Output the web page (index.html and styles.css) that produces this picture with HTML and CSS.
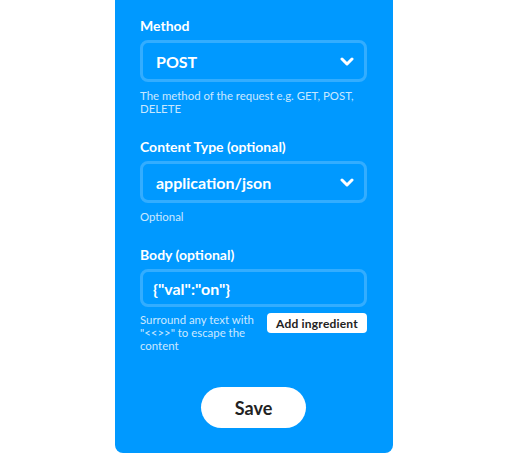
FILE: index.html
```html
<!DOCTYPE html>
<html>
<head>
<meta charset="utf-8">
<link rel="stylesheet" href="styles.css">
</head>
<body>
<div class="panel">
  <div class="field">
    <label class="label">Method</label>
    <div class="select">
      <span>POST</span>
      <svg class="chev" width="14" height="9" viewBox="0 0 14 9"><path d="M2 2 L7 7 L12 2" fill="none" stroke="#fff" stroke-width="3" stroke-linecap="round" stroke-linejoin="round"/></svg>
    </div>
    <p class="help">The method of the request e.g. GET, POST, DELETE</p>
  </div>
  <div class="field">
    <label class="label">Content Type (optional)</label>
    <div class="select">
      <span>application/json</span>
      <svg class="chev" width="14" height="9" viewBox="0 0 14 9"><path d="M2 2 L7 7 L12 2" fill="none" stroke="#fff" stroke-width="3" stroke-linecap="round" stroke-linejoin="round"/></svg>
    </div>
    <p class="help">Optional</p>
  </div>
  <div class="field">
    <label class="label">Body (optional)</label>
    <div class="input">{"val":"on"}</div>
    <div class="body-row">
      <p class="help narrow">Surround any text with "&lt;&lt;&gt;&gt;" to escape the content</p>
      <button class="ingredient">Add ingredient</button>
    </div>
  </div>
  <div class="actions">
    <button class="save">Save</button>
  </div>
</div>
</body>
</html>
```

FILE: styles.css
```css
html, body {
  margin: 0;
  padding: 0;
  background: #fff;
}
body {
  font-family: Lato, "Noto Sans", sans-serif;
}
.panel {
  margin-left: 115px;
  width: 278px;
  box-sizing: border-box;
  background: #0099ff;
  border-radius: 0 0 8px 8px;
  padding: 16px 26px 25px 25px;
  color: #fff;
}
.field {
  margin-bottom: 22px;
}
.label {
  display: block;
  font-weight: 700;
  font-size: 14px;
  line-height: 20px;
  margin-bottom: 4px;
}
.select {
  height: 42px;
  box-sizing: border-box;
  border: 3px solid rgba(255,255,255,0.2);
  border-radius: 8px;
  display: flex;
  align-items: center;
  justify-content: space-between;
  padding: 0 10px 0 13px;
  font-weight: 700;
  font-size: 16px;
}
.help {
  margin: 7px 0 0;
  font-size: 11.4px;
  line-height: 13px;
  color: rgba(255,255,255,0.8);
}
.input {
  height: 38px;
  box-sizing: border-box;
  border: 3px solid rgba(255,255,255,0.2);
  border-radius: 8px;
  display: flex;
  align-items: center;
  padding: 0 10px;
  font-weight: 700;
  font-size: 16px;
}
.body-row {
  display: flex;
  justify-content: space-between;
  align-items: flex-start;
  margin-top: 6px;
}
.body-row .help {
  margin: 0;
}
.narrow {
  width: 119px;
}
.ingredient {
  margin: 0;
  width: 100px;
  height: 20px;
  border: none;
  border-radius: 4px;
  background: #fff;
  color: #222;
  font-family: Lato, "Noto Sans", sans-serif;
  font-weight: 700;
  font-size: 12px;
  letter-spacing: 0.2px;
  padding: 0;
}
.actions {
  display: flex;
  justify-content: center;
  margin-top: 35px;
}
.save {
  width: 105px;
  height: 41px;
  border: none;
  border-radius: 21px;
  background: #fff;
  color: #222;
  font-family: Lato, "Noto Sans", sans-serif;
  font-weight: 700;
  font-size: 18px;
  padding: 0;
}
```
